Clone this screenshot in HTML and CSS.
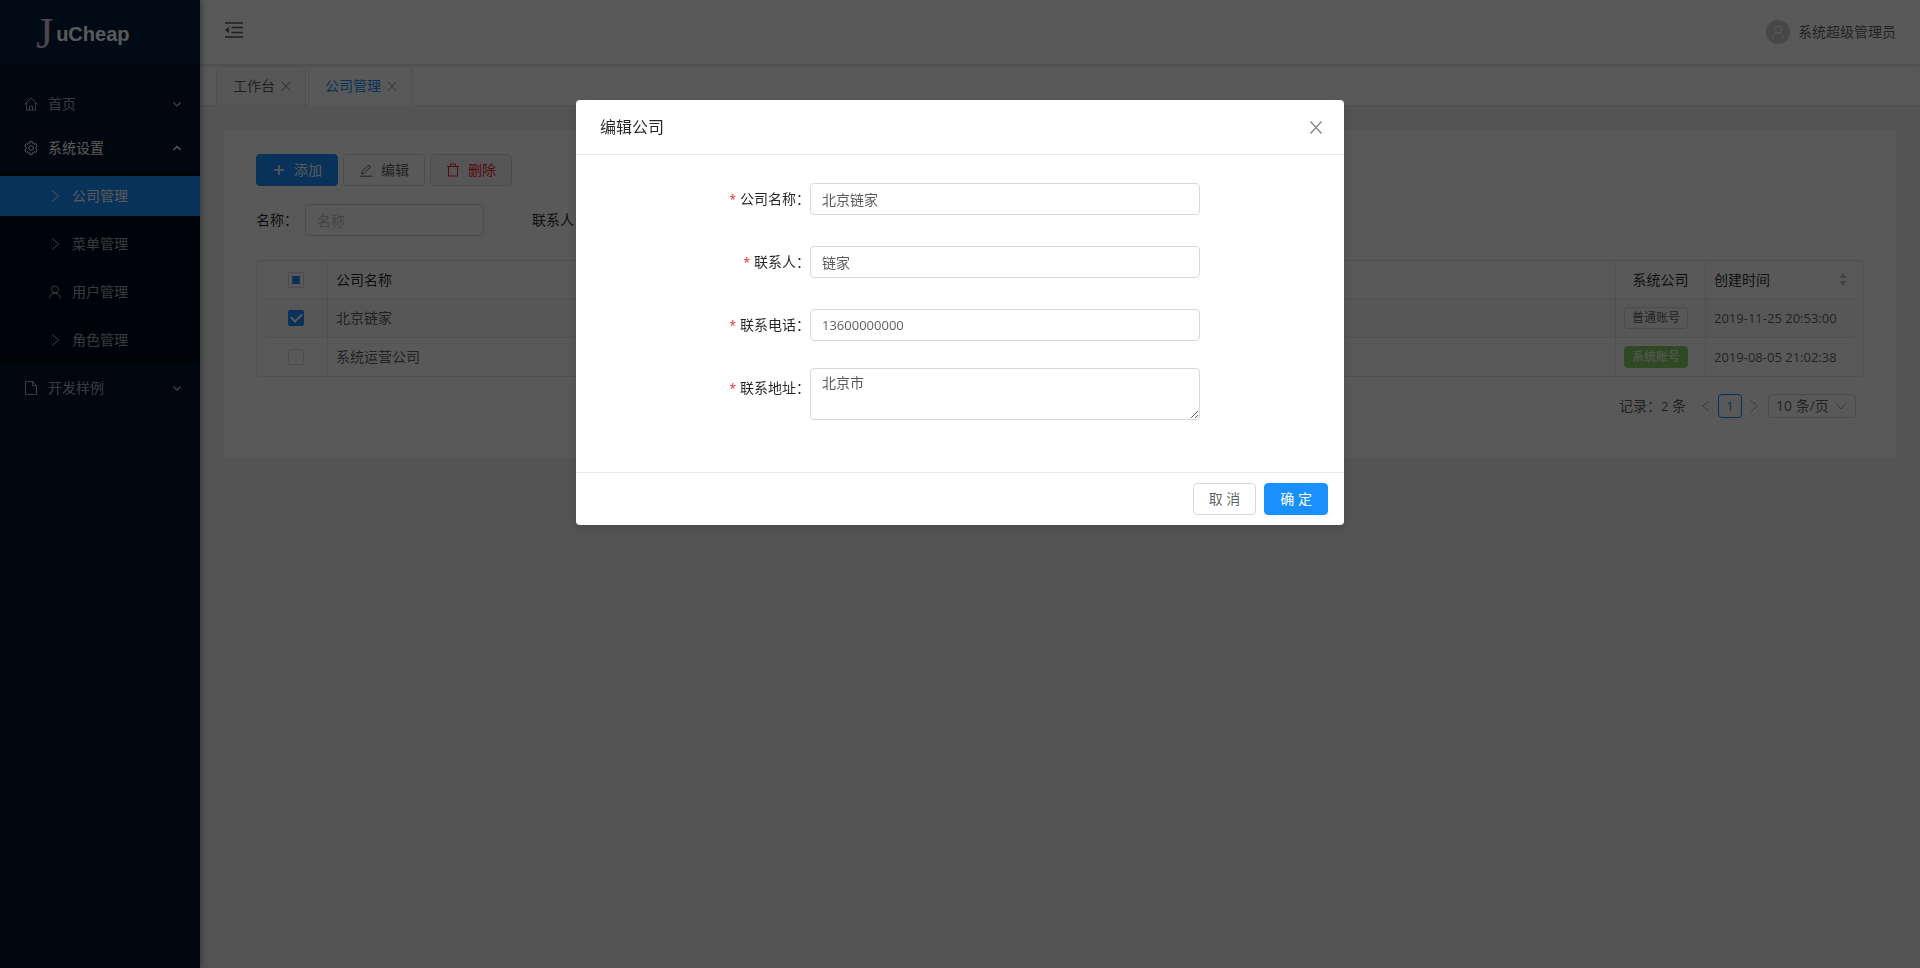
FILE: index.html
```
<!DOCTYPE html>
<html lang="zh-CN">
<head>
    <meta charset="UTF-8">
    <meta name="viewport" content="width=device-width, initial-scale=1.0">
    <title>JuCheap</title>
    <link rel="stylesheet" href="styles.css">
</head>
<body>
    <!-- shared icons -->
    <svg class="icon-defs">
        <symbol id="i-right" viewBox="0 0 14 14"><path d="M4 1.500 10.500 7 4 12.500"/></symbol>
        <symbol id="i-left" viewBox="0 0 14 14"><path d="M10 2 4 7l6 5"/></symbol>
        <symbol id="i-down" viewBox="0 0 14 14"><path d="M2 4.500 7 10l5-5.500"/></symbol>
        <symbol id="i-close" viewBox="0 0 14 14"><path d="M2.600 2.500l8.800 9.500M11.400 2.500l-8.800 9.500"/></symbol>
        <symbol id="i-user" viewBox="0 0 14 14"><circle cx="7" cy="4.500" r="3.500"/><path d="M1.500 13.500C1.700 10.500 4 8 7 8s5.300 2.500 5.500 5.500"/></symbol>
        <symbol id="i-home" viewBox="0 0 14 14"><path d="M.5 7.500 7 1l6.500 6.500M2.500 6v7h9V6M5.500 13V9h3v4"/></symbol>
        <symbol id="i-file" viewBox="0 0 14 14"><path d="M1.500.5h7l4 4v9h-11zM8.500.5v4h4"/></symbol>
        <symbol id="i-gear" viewBox="0 0 14 14"><path d="M5.700.6h2.600l.5 1.700 1.400.8 1.700-.4 1.300 2.200L12 6.200v1.600l1.200 1.300-1.300 2.200-1.700-.4-1.400.8-.5 1.700H5.700l-.5-1.700-1.400-.8-1.700.4L.8 9.100 2 7.800V6.200L.8 4.900l1.300-2.200 1.700.4 1.400-.8z"/><circle cx="7" cy="7" r="2.300"/></symbol>
    </svg>

    <div class="layout">
        <aside class="sider">
            <div class="logo"><span class="logo-j">J</span><span class="logo-text">uCheap</span></div>
            <nav class="menu">
                <a class="menu-title" href="#">
                    <svg class="icon"><use href="#i-home"/></svg><span>首页</span>
                    <svg class="arrow" viewBox="0 0 10 10"><path d="M1.500 3.500 5 7l3.500-3.500"/></svg>
                </a>
                <a class="menu-title open" href="#">
                    <svg class="icon"><use href="#i-gear"/></svg><span>系统设置</span>
                    <svg class="arrow" viewBox="0 0 10 10"><path d="M1.500 7 5 3.500 8.500 7"/></svg>
                </a>
                <div class="submenu">
                    <a class="menu-item selected" href="#"><svg class="icon"><use href="#i-right"/></svg><span>公司管理</span></a>
                    <a class="menu-item" href="#"><svg class="icon"><use href="#i-right"/></svg><span>菜单管理</span></a>
                    <a class="menu-item" href="#"><svg class="icon"><use href="#i-user"/></svg><span>用户管理</span></a>
                    <a class="menu-item" href="#"><svg class="icon"><use href="#i-right"/></svg><span>角色管理</span></a>
                </div>
                <a class="menu-title" href="#">
                    <svg class="icon"><use href="#i-file"/></svg><span>开发样例</span>
                    <svg class="arrow" viewBox="0 0 10 10"><path d="M1.500 3.500 5 7l3.500-3.500"/></svg>
                </a>
            </nav>
        </aside>

        <div class="main">
            <header class="header">
                <button class="trigger" aria-label="折叠菜单">
                    <svg width="20" height="20" viewBox="0 0 20 20"><path d="M1 3h18M7.500 7.500H19M7.500 12.500H19M1 17h18" fill="none" stroke="currentColor" stroke-width="1.600"/><path d="M1 10l4-3.300v6.600z" fill="currentColor"/></svg>
                </button>
                <div class="account">
                    <span class="avatar"><svg class="icon"><use href="#i-user"/></svg></span>
                    <span>系统超级管理员</span>
                </div>
            </header>

            <div class="tabs">
                <div class="tab"><a href="#">工作台</a><button aria-label="关闭"><svg class="icon"><use href="#i-close"/></svg></button></div>
                <div class="tab active"><a href="#">公司管理</a><button aria-label="关闭"><svg class="icon"><use href="#i-close"/></svg></button></div>
            </div>

            <main class="card">
                <div class="toolbar">
                    <button class="btn primary"><svg class="icon" viewBox="0 0 14 14"><path class="bold" d="M7 2v10M2 7h10"/></svg>添加</button>
                    <button class="btn"><svg class="icon" viewBox="0 0 14 14"><path d="M.5 13.200h13M3 8.500 9.500 2l2 2L5 10.500l-2.500.5z"/></svg>编辑</button>
                    <button class="btn danger"><svg class="icon" viewBox="0 0 14 14"><path d="M1 3.500h12M2.500 3.500v9.500h9V3.500M4.500 3.500v-2.500h5v2.500"/></svg>删除</button>
                </div>
                <div class="search">
                    <label for="s-name">名称：</label>
                    <input class="input" id="s-name" type="text" placeholder="名称">
                    <label for="s-contact">联系人：</label>
                    <input class="input" id="s-contact" type="text">
                </div>

                <div class="table-box">
                    <table>
                        <thead>
                            <tr>
                                <th class="col-check"><input class="half" type="checkbox" aria-label="全选"></th>
                                <th>公司名称</th>
                                <th class="col-type">系统公司</th>
                                <th class="col-time"><div class="sort-head">创建时间<svg width="8" height="13" viewBox="0 0 8 13"><path d="M0 5l4-5 4 5zM0 8l4 5 4-5z"/></svg></div></th>
                            </tr>
                        </thead>
                        <tbody>
                            <tr class="checked">
                                <td class="col-check"><input type="checkbox" aria-label="北京链家" checked></td>
                                <td>北京链家</td>
                                <td class="col-type"><span class="tag">普通账号</span></td>
                                <td class="num">2019-11-25 20:53:00</td>
                            </tr>
                            <tr>
                                <td class="col-check"><input type="checkbox" aria-label="系统运营公司"></td>
                                <td>系统运营公司</td>
                                <td class="col-type"><span class="tag green">系统账号</span></td>
                                <td class="num">2019-08-05 21:02:38</td>
                            </tr>
                        </tbody>
                    </table>
                </div>

                <div class="pagination">
                    <span class="total">记录：<span class="num">2</span> 条</span>
                    <button class="page-nav" aria-label="上一页"><svg class="icon"><use href="#i-left"/></svg></button>
                    <button class="page num">1</button>
                    <button class="page-nav" aria-label="下一页"><svg class="icon"><use href="#i-right"/></svg></button>
                    <div class="page-size">
                        <select aria-label="每页条数"><option>10 条/页</option></select>
                        <svg class="icon"><use href="#i-down"/></svg>
                    </div>
                </div>
            </main>
        </div>
    </div>

    <div class="mask">
        <form class="modal" role="dialog" aria-labelledby="modal-title">
            <div class="modal-header">
                <span id="modal-title">编辑公司</span>
                <button type="button" aria-label="关闭"><svg class="icon" viewBox="0 0 16 16"><path d="M2.500 2.500l11 12M13.500 2.500l-11 12"/></svg></button>
            </div>
            <div class="modal-body">
                <div class="form-item">
                    <label for="f-name">公司名称：</label>
                    <input class="input" id="f-name" type="text" value="北京链家">
                </div>
                <div class="form-item">
                    <label for="f-contact">联系人：</label>
                    <input class="input" id="f-contact" type="text" value="链家">
                </div>
                <div class="form-item">
                    <label for="f-phone">联系电话：</label>
                    <input class="input num" id="f-phone" type="text" value="13600000000">
                </div>
                <div class="form-item top">
                    <label for="f-address">联系地址：</label>
                    <textarea class="input" id="f-address">北京市</textarea>
                </div>
            </div>
            <div class="modal-footer">
                <button class="btn" type="button">取 消</button>
                <button class="btn primary" type="button">确 定</button>
            </div>
        </form>
    </div>
</body>
</html>
```

FILE: styles.css
```
* {
    box-sizing: border-box;
}
body {
    margin: 0;
    font-family: "Open Sans", "Noto Sans CJK SC", sans-serif;
    font-size: 14px;
    line-height: 20px;
    color: rgba(0,0,0,0.65);
    background: #f0f0f4;
}
a {
    color: inherit;
    text-decoration: none;
}
button, input, select, textarea {
    font: inherit;
    color: inherit;
}
button {
    padding: 0;
    border: none;
    background: none;
    cursor: pointer;
}
.icon-defs {
    display: none;
}
.icon {
    width: 14px;
    height: 14px;
    flex: none;
    fill: none;
    stroke: currentColor;
}
.bold {
    stroke-width: 1.5;
}
.num {
    font-size: 13px;
}
.layout {
    display: flex;
    min-height: 100vh;
}

/* sidebar */
.sider {
    width: 200px;
    flex: none;
    background: #001529;
    box-shadow: 2px 0 6px rgba(0,21,41,0.35);
    z-index: 2;
}
.logo {
    display: flex;
    align-items: center;
    height: 64px;
    padding: 4px 0 0 36px;
    background: #002140;
    color: #fff;
}
.logo-j {
    font-family: "Liberation Serif", serif;
    font-size: 44px;
    line-height: 60px;
    color: #e6c3e6;
}
.logo-text {
    padding-left: 3px;
    font-family: "Liberation Sans", sans-serif;
    font-size: 20px;
    font-weight: bold;
}
.menu {
    padding-top: 16px;
    color: rgba(255,255,255,0.65);
}
.menu-title, .menu-item {
    display: flex;
    align-items: center;
    gap: 10px;
    height: 40px;
    margin: 4px 0;
    padding: 0 18px 0 24px;
}
.menu-item {
    padding-left: 48px;
}
.submenu {
    display: flex;
    flex-direction: column;
    background: #000c17;
}
.open, .selected {
    color: #fff;
}
.selected {
    background: #1890ff;
}
.arrow {
    width: 10px;
    height: 10px;
    margin-left: auto;
    fill: none;
    stroke: currentColor;
    stroke-width: 1.5;
}

/* top */
.main {
    flex: 1;
    min-width: 0;
}
.header {
    display: flex;
    justify-content: space-between;
    height: 64px;
    padding: 0 24px;
    background: #fff;
    box-shadow: 0 1px 4px rgba(0,21,41,0.2);
    position: relative;
}
.trigger {
    height: 60px;
}
.trigger svg {
    display: block;
}
.account {
    display: flex;
    align-items: center;
    gap: 8px;
}
.avatar {
    display: flex;
    align-items: center;
    justify-content: center;
    width: 24px;
    height: 24px;
    border-radius: 50%;
    background: #ccc;
    color: #fff;
}
.tabs {
    display: flex;
    gap: 2px;
    height: 42px;
    padding: 2px 16px 0;
    background: #fff;
    border-bottom: 1px solid #e8e8e8;
}
.tab {
    display: flex;
    align-items: center;
    gap: 4px;
    height: 40px;
    padding: 0 12px 0 16px;
    border: 1px solid #e8e8e8;
    border-radius: 4px 4px 0 0;
    background: #fafafa;
}
.tab button {
    display: flex;
    color: rgba(0,0,0,0.45);
}
.active {
    background: #fff;
    border-bottom-color: #fff;
}
.active a {
    color: #1890ff;
}

/* content */
.card {
    margin: 24px;
    padding: 24px 32px 40px;
    background: #fff;
    border-radius: 2px;
}
.toolbar {
    display: flex;
    gap: 5px;
}
.btn {
    display: flex;
    align-items: center;
    gap: 8px;
    height: 32px;
    padding: 0 15px;
    border: 1px solid #d9d9d9;
    border-radius: 4px;
    background: #fff;
}
.primary {
    color: #fff;
    background: #1890ff;
    border-color: #1890ff;
}
.danger {
    color: #f5222d;
    background: #f5f5f5;
}
.search {
    display: flex;
    align-items: center;
    padding: 18px 0 24px;
    color: rgba(0,0,0,0.85);
}
.search .input {
    width: 179px;
    margin: 0 48px 0 7px;
}
.input {
    height: 32px;
    padding: 4px 11px;
    border: 1px solid #d9d9d9;
    border-radius: 4px;
    background: #fff;
    color: rgba(0,0,0,0.65);
}
.input::placeholder {
    color: #bfbfbf;
}
.table-box {
    padding: 0 8px;
    border: 1px solid #e8e8e8;
    border-radius: 4px;
}
table {
    width: 100%;
    border-spacing: 0;
}
th, td {
    height: 39px;
    padding: 0 8px;
    text-align: left;
    font-weight: normal;
    border-right: 1px solid #e8e8e8;
    border-bottom: 1px solid #e8e8e8;
}
th {
    height: 38px;
    color: rgba(0,0,0,0.85);
}
th:last-child, td:last-child {
    border-right: none;
}
tr:last-child td {
    height: 38px;
    border-bottom: none;
}
.checked {
    background: #fafafa;
}
.col-check {
    width: 63px;
    text-align: center;
}
.col-type {
    width: 90px;
    text-align: center;
}
.col-time {
    width: 149px;
}
.sort-head {
    display: flex;
    align-items: center;
    justify-content: space-between;
}
.sort-head svg {
    fill: #bfbfbf;
}
input[type="checkbox"] {
    appearance: none;
    display: block;
    width: 16px;
    height: 16px;
    margin: 0 auto;
    border: 1px solid #d9d9d9;
    border-radius: 2px;
    background: #fff;
}
input[type="checkbox"]:checked {
    display: grid;
    place-items: center;
    border-color: #1890ff;
    background: #1890ff;
}
input[type="checkbox"]:checked::before {
    content: "";
    width: 9px;
    height: 5px;
    margin-bottom: 3px;
    border: solid #fff;
    border-width: 0 0 2px 2px;
    transform: rotate(-45deg);
}
input.half {
    padding: 3px;
    background: #1890ff content-box;
}
.tag {
    display: block;
    width: 64px;
    height: 22px;
    border: 1px solid #d9d9d9;
    border-radius: 4px;
    font-size: 12px;
    white-space: nowrap;
}
.green {
    color: #fff;
    background: #87d068;
    border-color: #87d068;
}
.pagination {
    display: flex;
    align-items: center;
    justify-content: flex-end;
    padding: 17px 8px 0;
}
.page-nav {
    display: flex;
    align-items: center;
    justify-content: center;
    width: 24px;
    height: 24px;
    color: rgba(0,0,0,0.35);
}
.total {
    margin-right: 8px;
}
.page {
    width: 24px;
    height: 24px;
    border: 1px solid #1890ff;
    border-radius: 4px;
    color: #1890ff;
}
.page-size {
    display: flex;
    align-items: center;
    width: 88px;
    height: 24px;
    margin-left: 2px;
    padding: 0 7px;
    border: 1px solid #d9d9d9;
    border-radius: 4px;
}
.page-size select {
    appearance: none;
    flex: 1;
    min-width: 0;
    padding: 0;
    border: none;
    background: none;
}
.page-size .icon {
    color: rgba(0,0,0,0.35);
}

/* modal */
.mask {
    position: fixed;
    inset: 0;
    z-index: 10;
    padding-top: 100px;
    background: rgba(0,0,0,0.65);
}
.modal {
    width: 40%;
    margin: 0 auto;
    background: #fff;
    border-radius: 4px;
    box-shadow: 0 4px 12px rgba(0,0,0,0.15);
}
.modal-header {
    display: flex;
    align-items: center;
    justify-content: space-between;
    height: 55px;
    padding: 0 20px 0 24px;
    border-bottom: 1px solid #e8e8e8;
    font-size: 16px;
    color: rgba(0,0,0,0.85);
}
.modal-header button {
    display: flex;
    color: rgba(0,0,0,0.45);
}
.modal-header .icon {
    width: 16px;
    height: 16px;
    stroke-width: 1.5;
}
.modal-body {
    display: grid;
    gap: 23px;
    padding: 24px 24px 52px;
}
.form-item {
    display: grid;
    grid-template-columns: 7fr 13fr 4fr;
    align-items: center;
}
.top {
    align-items: start;
}
.form-item label {
    height: 40px;
    text-align: right;
    line-height: 40px;
    color: rgba(0,0,0,0.85);
}
.form-item label::before {
    content: "*";
    margin-right: 4px;
    font-size: 12px;
    line-height: 1;
    color: #f5222d;
}
textarea.input {
    height: 52px;
    resize: vertical;
}
.modal-footer {
    display: flex;
    justify-content: flex-end;
    gap: 8px;
    padding: 10px 16px;
    border-top: 1px solid #e8e8e8;
}
```
